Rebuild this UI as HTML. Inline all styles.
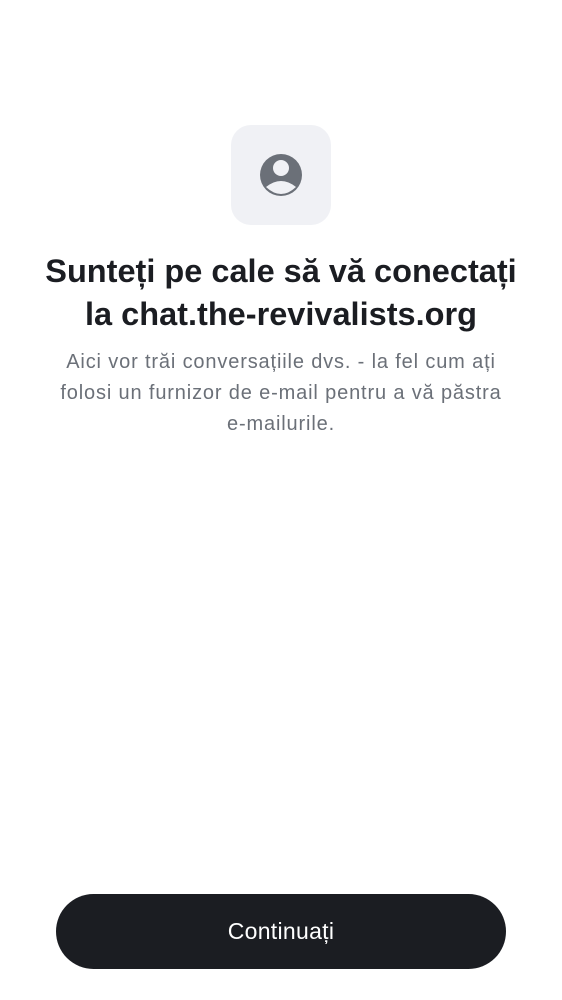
<!DOCTYPE html>
<html><head><meta charset="utf-8"><style>
body{margin:0;width:562px;height:1000px;background:#fff;font-family:"Liberation Sans",sans-serif;position:relative;overflow:hidden}
.box{position:absolute;left:231px;top:125px;width:100px;height:100px;border-radius:20px;background:#f0f1f5}
h1{position:absolute;top:250px;left:0;width:562px;margin:0;text-align:center;font-size:32.5px;line-height:43px;font-weight:bold;color:#1b1d22}
p{position:absolute;top:347px;left:21px;width:520px;margin:0;text-align:center;font-size:20px;line-height:31px;color:#6b7078;letter-spacing:0.85px}
.btn{position:absolute;left:56px;top:894px;width:450px;height:75px;border-radius:38px;background:#1b1d22;color:#fff;font-size:23px;text-align:center;line-height:75px;letter-spacing:0.3px}
</style></head><body>
<div class="box"><svg width="100" height="100" viewBox="0 0 100 100"><circle cx="50" cy="50" r="21" fill="#6b7078"/><circle cx="50" cy="43" r="8" fill="#f0f1f5"/><path d="M35 62 Q50 50 65 62 Q50 76 35 62Z" fill="#f0f1f5"/></svg></div>
<h1>Sunteți pe cale să vă conectați<br>la chat.the-revivalists.org</h1>
<p>Aici vor trăi conversațiile dvs. - la fel cum ați<br>folosi un furnizor de e-mail pentru a vă păstra<br>e-mailurile.</p>
<div class="btn">Continuați</div>
</body></html>
